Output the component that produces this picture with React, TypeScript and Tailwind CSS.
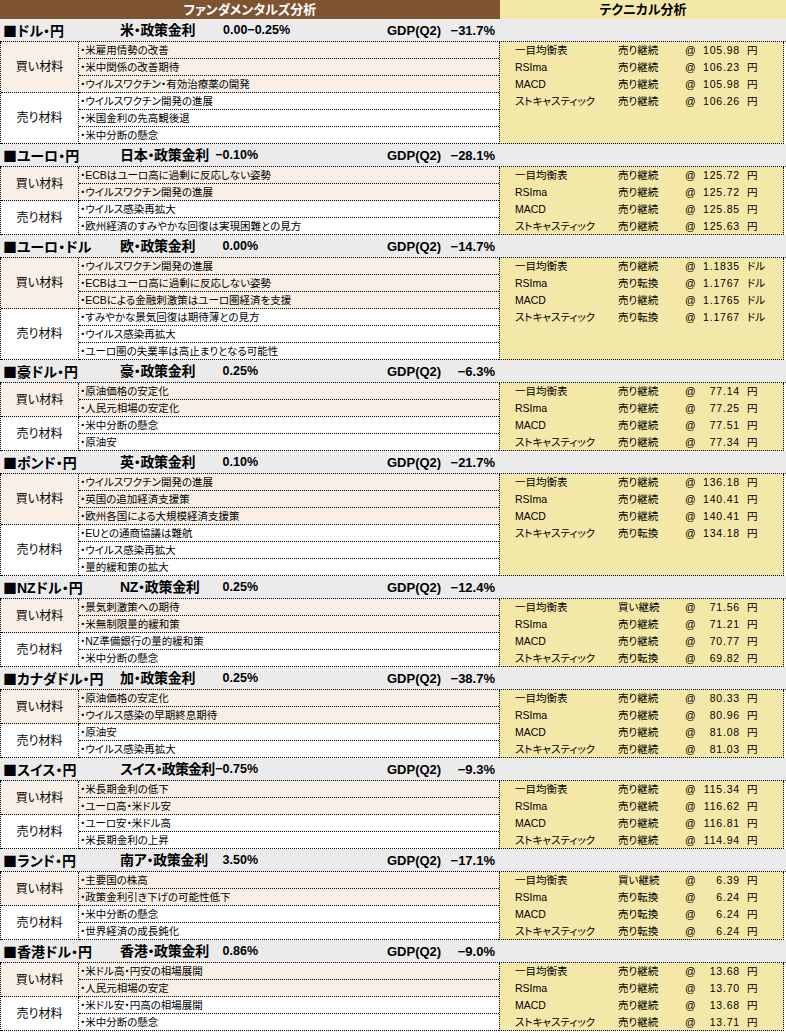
import React from "react"

type Pair = {
  name: string
  policy: string
  rate: string
  rateLeft?: boolean
  tight?: boolean
  gdp: string
  buy: string[]
  sell: string[]
  tech: [string, string][]
  unit: string
}

const INDICATORS = ["一目均衡表", "RSIma", "MACD", "ストキャスティック"]

const pairs: Pair[] = [
  {
    name: "ドル・円",
    policy: "米・政策金利",
    rate: "0.00−0.25%",
    rateLeft: true,
    gdp: "−31.7%",
    buy: ["・米雇用情勢の改善", "・米中関係の改善期待", "・ウイルスワクチン・有効治療薬の開発"],
    sell: ["・ウイルスワクチン開発の進展", "・米国金利の先高観後退", "・米中分断の懸念"],
    tech: [["売り継続", "105.98"], ["売り継続", "106.23"], ["売り継続", "105.98"], ["売り継続", "106.26"]],
    unit: "円",
  },
  {
    name: "ユーロ・円",
    policy: "日本・政策金利",
    rate: "−0.10%",
    gdp: "−28.1%",
    buy: ["・ECBはユーロ高に過剰に反応しない姿勢", "・ウイルスワクチン開発の進展"],
    sell: ["・ウイルス感染再拡大", "・欧州経済のすみやかな回復は実現困難との見方"],
    tech: [["売り継続", "125.72"], ["売り継続", "125.72"], ["売り継続", "125.85"], ["売り継続", "125.63"]],
    unit: "円",
  },
  {
    name: "ユーロ・ドル",
    policy: "欧・政策金利",
    rate: "0.00%",
    gdp: "−14.7%",
    buy: ["・ウイルスワクチン開発の進展", "・ECBはユーロ高に過剰に反応しない姿勢", "・ECBによる金融刺激策はユーロ圏経済を支援"],
    sell: ["・すみやかな景気回復は期待薄との見方", "・ウイルス感染再拡大", "・ユーロ圏の失業率は高止まりとなる可能性"],
    tech: [["売り継続", "1.1835"], ["売り転換", "1.1767"], ["売り継続", "1.1765"], ["売り転換", "1.1767"]],
    unit: "ドル",
  },
  {
    name: "豪ドル・円",
    policy: "豪・政策金利",
    rate: "0.25%",
    gdp: "−6.3%",
    buy: ["・原油価格の安定化", "・人民元相場の安定化"],
    sell: ["・米中分断の懸念", "・原油安"],
    tech: [["売り継続", "77.14"], ["売り継続", "77.25"], ["売り継続", "77.51"], ["売り継続", "77.34"]],
    unit: "円",
  },
  {
    name: "ポンド・円",
    policy: "英・政策金利",
    rate: "0.10%",
    gdp: "−21.7%",
    buy: ["・ウイルスワクチン開発の進展", "・英国の追加経済支援策", "・欧州各国による大規模経済支援策"],
    sell: ["・EUとの通商協議は難航", "・ウイルス感染再拡大", "・量的緩和策の拡大"],
    tech: [["売り継続", "136.18"], ["売り継続", "140.41"], ["売り継続", "140.41"], ["売り転換", "134.18"]],
    unit: "円",
  },
  {
    name: "NZドル・円",
    policy: "NZ・政策金利",
    rate: "0.25%",
    gdp: "−12.4%",
    buy: ["・景気刺激策への期待", "・米無制限量的緩和策"],
    sell: ["・NZ準備銀行の量的緩和策", "・米中分断の懸念"],
    tech: [["買い継続", "71.56"], ["売り継続", "71.21"], ["売り継続", "70.77"], ["売り転換", "69.82"]],
    unit: "円",
  },
  {
    name: "カナダドル・円",
    policy: "加・政策金利",
    rate: "0.25%",
    gdp: "−38.7%",
    buy: ["・原油価格の安定化", "・ウイルス感染の早期終息期待"],
    sell: ["・原油安", "・ウイルス感染再拡大"],
    tech: [["売り継続", "80.33"], ["売り継続", "80.96"], ["売り継続", "81.08"], ["売り継続", "81.03"]],
    unit: "円",
  },
  {
    name: "スイス・円",
    policy: "スイス・政策金利",
    rate: "−0.75%",
    tight: true,
    gdp: "−9.3%",
    buy: ["・米長期金利の低下", "・ユーロ高・米ドル安"],
    sell: ["・ユーロ安・米ドル高", "・米長期金利の上昇"],
    tech: [["売り継続", "115.34"], ["売り継続", "116.62"], ["売り継続", "116.81"], ["売り継続", "114.94"]],
    unit: "円",
  },
  {
    name: "ランド・円",
    policy: "南ア・政策金利",
    rate: "3.50%",
    gdp: "−17.1%",
    buy: ["・主要国の株高", "・政策金利引き下げの可能性低下"],
    sell: ["・米中分断の懸念", "・世界経済の成長鈍化"],
    tech: [["買い継続", "6.39"], ["売り転換", "6.24"], ["売り転換", "6.24"], ["売り転換", "6.24"]],
    unit: "円",
  },
  {
    name: "香港ドル・円",
    policy: "香港・政策金利",
    rate: "0.86%",
    gdp: "−9.0%",
    buy: ["・米ドル高・円安の相場展開", "・人民元相場の安定"],
    sell: ["・米ドル安・円高の相場展開", "・米中分断の懸念"],
    tech: [["売り継続", "13.68"], ["売り継続", "13.70"], ["売り継続", "13.68"], ["売り継続", "13.71"]],
    unit: "円",
  },
]

function Group({ label, items, bg }: { label: string; items: string[]; bg: string }) {
  return (
    <div className={`flex ${bg}`}>
      <div className="flex w-[78px] items-center justify-center border-r border-b border-dotted border-black text-[12px]">
        {label}
      </div>
      <div className="flex-1">
        {items.map((t, i) => (
          <div
            key={i}
            className="flex h-[17px] items-center border-b border-dotted border-black pl-[1px] text-[10.5px] leading-none whitespace-nowrap"
          >
            {t}
          </div>
        ))}
      </div>
    </div>
  )
}

function Block({ pair }: { pair: Pair }) {
  return (
    <div>
      {/* pair title */}
      <div className="flex h-[23px] items-center border-b border-dotted border-black bg-[#ebebeb] text-[14px] leading-none font-bold whitespace-nowrap">
        <span className="w-[120px] pl-[3px]">
          <span className="font-['Noto_Sans_CJK_JP',sans-serif]">■</span>
          {pair.name}
        </span>
        <span className={pair.tight ? "w-[95px] tracking-[-0.9px]" : "w-[95px] tracking-[-0.3px]"}>{pair.policy}</span>
        <span className={pair.rateLeft ? "w-[43px] pl-[8px] text-[12.5px]" : "w-[43px] text-right text-[12.5px]"}>
          {pair.rate}
        </span>
        <span className="ml-[129px] flex w-[108px] justify-between text-[13px]">
          <span>GDP(Q2)</span>
          <span>{pair.gdp}</span>
        </span>
      </div>

      <div className="flex">
        {/* fundamentals */}
        <div className="w-[499px] border-l border-dotted border-black">
          <Group label="買い材料" items={pair.buy} bg="bg-[#f8efe6]" />
          <Group label="売り材料" items={pair.sell} bg="bg-white" />
        </div>

        {/* technicals */}
        <div className="w-[285px] border-x border-b border-dotted border-black bg-[#f4e8a8]">
          {pair.tech.map(([status, value], i) => (
            <div
              key={i}
              className={`flex items-center text-[10.5px] leading-none whitespace-nowrap ${i === 3 ? "h-[16px]" : "h-[17px]"}`}
            >
              <span className="w-[118px] pl-[15px]">{INDICATORS[i]}</span>
              <span className="w-[67px]">{status}</span>
              <span className="w-[17px]">@</span>
              <span className="w-[38px] text-right tracking-[0.8px]">{value}</span>
              <span className="pl-[7px]">{pair.unit}</span>
            </div>
          ))}
        </div>
      </div>
    </div>
  )
}

export default function App() {
  return (
    <div className="w-[786px] bg-white font-['Liberation_Sans','Noto_Sans_CJK_JP',sans-serif] text-black [font-feature-settings:'palt']">
      <div className="flex h-[19px] text-[13px] leading-none font-bold">
        <div className="flex w-[500px] items-center justify-center bg-[#7e5330] text-white">ファンダメンタルズ分析</div>
        <div className="flex flex-1 items-center justify-center bg-[#f4e8a8]">テクニカル分析</div>
      </div>
      {pairs.map((p) => (
        <Block key={p.name} pair={p} />
      ))}
    </div>
  )
}
